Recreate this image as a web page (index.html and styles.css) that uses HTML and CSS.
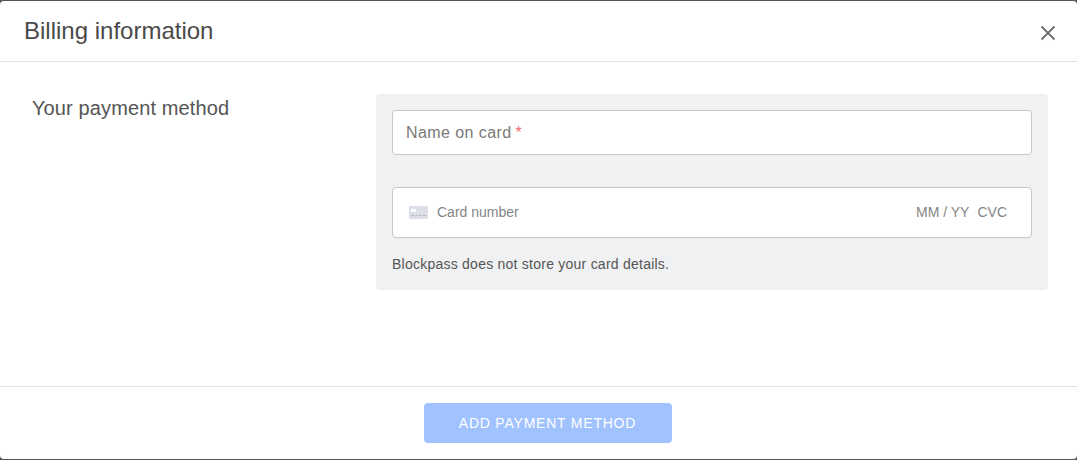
FILE: index.html
```html
<!DOCTYPE html>
<html lang="en">
<head>
<meta charset="utf-8">
<title>Billing information</title>
<link rel="stylesheet" href="styles.css">
</head>
<body>
<div class="modal">
  <header class="modal-header">
    <h1 class="modal-title">Billing information</h1>
    <button class="close" aria-label="Close">
      <svg width="16" height="16" viewBox="0 0 16 16"><path d="M1.500 1.500 14.500 14.500M14.500 1.500 1.500 14.500" fill="none" stroke="#6f6f6f" stroke-width="1.8"/></svg>
    </button>
  </header>
  <main class="modal-body">
    <h2 class="section-title">Your payment method</h2>
    <section class="panel">
      <div class="field field-name">
        <span class="placeholder">Name on card</span><span class="required">*</span>
      </div>
      <div class="field field-card">
        <svg class="card-icon" width="19" height="13" viewBox="0 0 19 13">
          <rect width="19" height="13" rx="1.500" fill="#dcdee8"/>
          <rect x="2" y="3" width="5" height="3" fill="#fff"/>
          <path d="M2 9.500h3M6.500 9.500h2.500M10 9.500h2.500M14 9.500h3" stroke="#b4b7c4" stroke-width="1"/>
        </svg>
        <span class="card-number">Card number</span>
        <span class="card-expiry">MM / YY</span>
        <span class="card-cvc">CVC</span>
      </div>
      <p class="note">Blockpass does not store your card details.</p>
    </section>
  </main>
  <footer class="modal-footer">
    <button class="submit">ADD PAYMENT METHOD</button>
  </footer>
</div>
</body>
</html>
```
FILE: styles.css
```css
* { box-sizing: border-box; }
html, body { margin: 0; height: 100%; }
body {
  background: #555;
  font-family: "Liberation Sans", Arial, sans-serif;
  padding: 1px 0;
  overflow: hidden;
}
.modal {
  height: 458px;
  background: #fff;
  border-radius: 4px;
  display: flex;
  flex-direction: column;
}
.modal-header {
  height: 61px;
  flex: none;
  border-bottom: 1px solid #e0e0e0;
  display: flex;
  align-items: center;
  justify-content: space-between;
  padding: 0 21px 0 24px;
}
.modal-title {
  margin: 0;
  font-size: 24px;
  font-weight: 400;
  color: #4a4a4a;
}
.close {
  border: 0;
  background: none;
  padding: 0;
  width: 16px;
  height: 16px;
  margin-top: 3px;
}
.close svg { display: block; }
.modal-body {
  flex: 1;
  display: flex;
  padding: 32px 29px 0 32px;
  justify-content: space-between;
  align-items: flex-start;
}
.section-title {
  margin: 3px 0 0;
  font-size: 20px;
  line-height: 23px;
  font-weight: 400;
  letter-spacing: 0.12px;
  color: #555;
}
.panel {
  width: 672px;
  height: 196px;
  background: #f0f1f3;
  border-radius: 4px;
  padding: 16px;
}
.field {
  background: #fff;
  border: 1px solid #c4c6ca;
  border-radius: 4px;
  display: flex;
  align-items: center;
}
.field-name {
  height: 45px;
  padding-left: 13px;
  font-size: 16px;
  letter-spacing: 0.42px;
  color: #7a7a7a;
}
.required { color: #ee6a6a; margin-left: 4px; font-size: 16px; }
.field-card {
  height: 51px;
  margin-top: 32px;
  padding: 0 24px 2px 16px;
  font-size: 14px;
  color: #858585;
}
.card-icon { flex: none; margin: 2px 9px 0 0; }
.card-number { flex: 1; }
.card-cvc { margin-left: 8px; }
.note {
  margin: 18px 0 0;
  font-size: 14px;
  line-height: 16px;
  letter-spacing: 0.24px;
  color: #555;
}
.modal-footer {
  height: 73px;
  flex: none;
  border-top: 1px solid #e0e0e0;
  display: flex;
  justify-content: center;
  padding: 16px 0 0 18px;
}
.submit {
  width: 248px;
  height: 40px;
  border: 0;
  border-radius: 4px;
  background: #a0c2ff;
  color: #fff;
  font-family: inherit;
  font-size: 14px;
  letter-spacing: 0.78px;
}
```
